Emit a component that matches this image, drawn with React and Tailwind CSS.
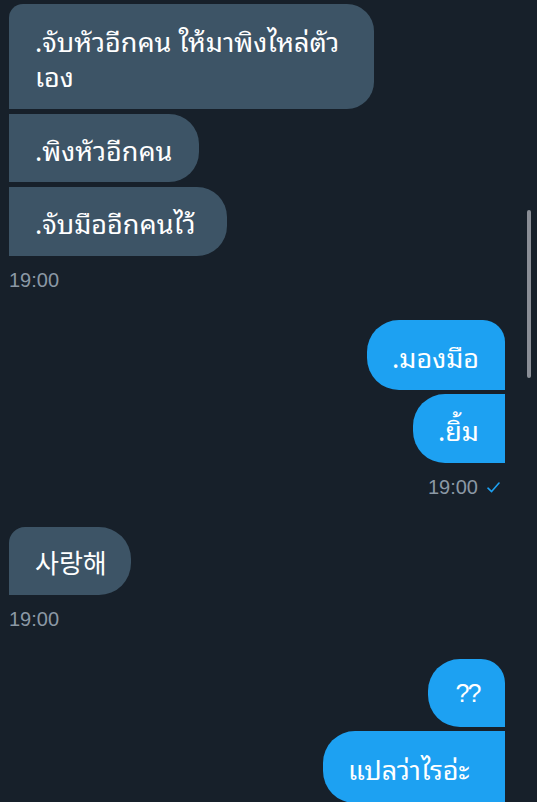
export default function App() {
  const font = { fontFamily: '"Noto Sans Thai Looped", "Garuda", "Loma", "Waree", "Noto Sans Thai", "Noto Sans", "Liberation Sans", "Noto Sans CJK KR", sans-serif' };
  const recv = "bg-[#3d5466] text-white text-[27px] leading-[35px] pl-[26px] flex items-center whitespace-nowrap";
  const sent = "bg-[#1da1f2] text-white text-[27px] leading-[35px] pl-[25px] flex items-center whitespace-nowrap";
  const ts = { fontFamily: '"Liberation Sans", Arial, sans-serif' };
  return (
    <div className="relative w-[537px] h-[802px] overflow-hidden bg-[#17202a]" style={font}>
      <div className="flex flex-col pt-[4px]">
        <div className="flex flex-col items-start gap-[5px] pl-[9px]">
          <div className="bg-[#3d5466] text-white text-[27px] leading-[35px] pl-[26px] pt-[18px] w-[365px] h-[105px] rounded-tl-[14px] rounded-tr-[27px] rounded-br-[27px] whitespace-nowrap">
            .จับหัวอีกคน ให้มาพิงไหล่ตัว<br />เอง
          </div>
          <div className={`${recv} w-[190px] h-[68px] rounded-r-[30px]`}>.พิงหัวอีกคน</div>
          <div className={`${recv} w-[218px] h-[69px] rounded-r-[30px]`}>.จับมืออีกคนไว้</div>
          <div className="mt-[7px] text-[20px] leading-[24px] text-[#8b98a5]" style={ts}>19:00</div>
        </div>

        <div className="flex flex-col items-end gap-[4px] pr-[32px] mt-[28px]">
          <div className={`${sent} w-[138px] h-[70px] rounded-tr-[22px] rounded-l-[32px]`}>.มองมือ</div>
          <div className={`${sent} w-[92px] h-[69px] rounded-l-[32px]`}>.ยิ้ม</div>
          <div className="mt-[8px] mr-[5px] flex items-center gap-[9px] text-[20px] leading-[24px] text-[#8b98a5]" style={ts}>
            <span>19:00</span>
            <svg width="13" height="11" viewBox="0 0 13 11" fill="none">
              <path d="M1 6.2 L4.6 9.6 L12 1" stroke="#1da1f2" strokeWidth="1.6" strokeLinecap="round" strokeLinejoin="round" />
            </svg>
          </div>
        </div>

        <div className="flex flex-col items-start gap-[5px] pl-[9px] mt-[28px]">
          <div className="bg-[#3d5466] text-white text-[26px] leading-[35px] pl-[26px] flex items-center w-[122px] h-[68px] rounded-tl-[16px] rounded-r-[32px]" style={{ fontFamily: '"Noto Sans CJK KR", sans-serif' }}>사랑해</div>
          <div className="mt-[7px] text-[20px] leading-[24px] text-[#8b98a5]" style={ts}>19:00</div>
        </div>

        <div className="flex flex-col items-end gap-[4px] pr-[32px] mt-[28px]">
          <div className="bg-[#1da1f2] text-white text-[25px] leading-[35px] flex items-center justify-center pl-[2px] tracking-[-2px] w-[77px] h-[68px] rounded-tr-[24px] rounded-l-[32px]" style={ts}>??</div>
          <div className={`${sent} w-[182px] h-[72px] rounded-l-[32px]`}>แปลว่าไรอ่ะ</div>
        </div>
      </div>

      <div className="absolute left-[527px] top-[210px] w-[4px] h-[168px] rounded-full bg-[#8a8e96]" />
    </div>
  );
}
